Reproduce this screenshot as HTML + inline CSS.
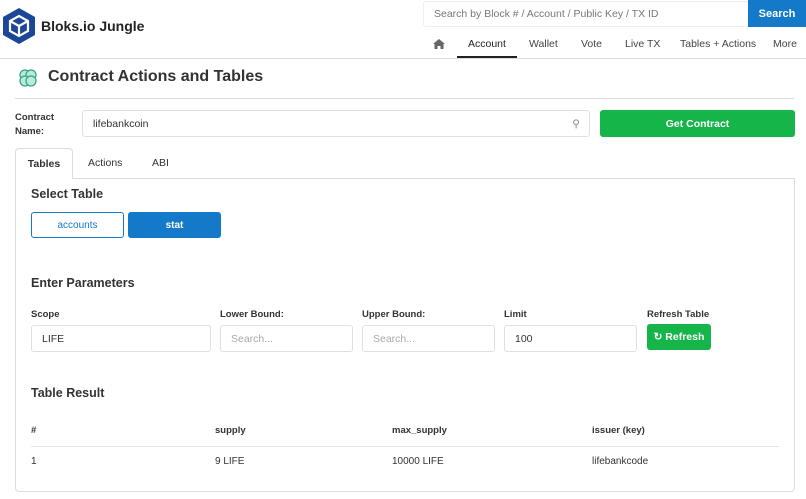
<!DOCTYPE html>
<html><head><style>
*{box-sizing:border-box;margin:0;padding:0}
body{width:806px;height:499px;background:#fff;font-family:"Liberation Sans",sans-serif;color:#333;position:relative;overflow:hidden;font-size:10.5px}
.a{position:absolute}
.btn{display:flex;align-items:center;justify-content:center}
.inp{position:absolute;border:1px solid #e0e0e0;border-radius:3px;background:#fff;font-size:10.5px;padding-left:10px;display:flex;align-items:center}
.ph{color:#aaa}
.lbl{position:absolute;font-size:9.5px;font-weight:bold;color:#333}
h3{position:absolute;font-size:12.5px;font-weight:bold;color:#333}
</style></head><body>
<svg class="a" style="left:2px;top:7px" width="34" height="38" viewBox="0 0 34 38"><polygon points="17,1 33,10 33,28 17,37 1,28 1,10" fill="#1c4797"/><g fill="none" stroke="#fff" stroke-width="2.2"><polygon points="17,9 26,14 26,24 17,29 8,24 8,14"/><path d="M8,14 17,19 26,14 M17,19 V29"/></g></svg>
<div class="a" style="left:41px;top:18px;font-size:14px;font-weight:bold;color:#222">Bloks.io Jungle</div>
<div class="inp" style="left:423px;top:1px;width:326px;height:26px;border-color:#eee"><span class="ph" style="color:#777">Search by Block # / Account / Public Key / TX ID</span></div>
<div class="a btn" style="left:748px;top:0;width:58px;height:27px;background:#1479c9;color:#fff;font-weight:bold;font-size:11px">Search</div>
<svg class="a" style="left:433px;top:39px" width="12" height="10" viewBox="0 0 12 10"><path d="M6,0 L12,5 L10.5,5 L10.5,10 L7.5,10 L7.5,7 L4.5,7 L4.5,10 L1.5,10 L1.5,5 L0,5 Z" fill="#666"/></svg>
<div class="a" style="left:468px;top:38px;font-size:10.5px;color:#222">Account</div>
<div class="a" style="left:457px;top:56px;width:60px;height:3px;background:#222"></div>
<div class="a" style="left:529px;top:38px;color:#444">Wallet</div>
<div class="a" style="left:581px;top:38px;color:#444">Vote</div>
<div class="a" style="left:625px;top:38px;color:#444">Live TX</div>
<div class="a" style="left:680px;top:38px;color:#444">Tables + Actions</div>
<div class="a" style="left:773px;top:38px;color:#444">More</div>
<div class="a" style="left:0;top:58px;width:806px;height:1px;background:#ddd"></div>
<svg class="a" style="left:17px;top:68px" width="22" height="20" viewBox="0 0 22 20"><g fill="#b8ecd9" stroke="#3aa389" stroke-width="1.3"><circle cx="8" cy="7" r="5"/><circle cx="14" cy="7" r="5"/><circle cx="8" cy="13" r="5"/><circle cx="14" cy="13" r="5"/></g></svg>
<div class="a" style="left:48px;top:68px;font-size:16px;font-weight:bold;color:#333">Contract Actions and Tables</div>
<div class="a" style="left:15px;top:98px;width:779px;height:1px;background:#ddd"></div>
<div class="lbl" style="left:15px;top:111px;line-height:14px">Contract<br>Name:</div>
<div class="inp" style="left:82px;top:110px;width:508px;height:27px">lifebankcoin<span style="position:absolute;right:9px;color:#888">&#9906;</span></div>
<div class="a btn" style="left:600px;top:110px;width:195px;height:27px;background:#16b54a;border-radius:3px;color:#fff;font-size:10.5px;font-weight:bold">Get Contract</div>
<div class="a" style="left:15px;top:178px;width:780px;height:314px;border:1px solid #ddd;border-radius:0 0 4px 4px"></div>
<div class="a btn" style="left:15px;top:148px;width:58px;height:31px;border:1px solid #ddd;border-bottom:none;background:#fff;border-radius:4px 4px 0 0;font-weight:bold;font-size:10.5px">Tables</div>
<div class="a" style="left:88px;top:157px">Actions</div>
<div class="a" style="left:152px;top:157px">ABI</div>
<h3 style="left:31px;top:187px">Select Table</h3>
<div class="a btn" style="left:31px;top:212px;width:93px;height:26px;border:1px solid #1479c9;border-radius:3px;color:#1479c9;font-size:10px">accounts</div>
<div class="a btn" style="left:128px;top:212px;width:93px;height:26px;background:#1479c9;border-radius:3px;color:#fff;font-size:10px;font-weight:bold">stat</div>
<h3 style="left:31px;top:276px">Enter Parameters</h3>
<div class="lbl" style="left:31px;top:309px">Scope</div>
<div class="lbl" style="left:220px;top:309px">Lower Bound:</div>
<div class="lbl" style="left:362px;top:309px">Upper Bound:</div>
<div class="lbl" style="left:504px;top:309px">Limit</div>
<div class="lbl" style="left:647px;top:309px">Refresh Table</div>
<div class="inp" style="left:31px;top:325px;width:180px;height:27px">LIFE</div>
<div class="inp" style="left:220px;top:325px;width:133px;height:27px"><span class="ph">Search...</span></div>
<div class="inp" style="left:362px;top:325px;width:133px;height:27px"><span class="ph">Search...</span></div>
<div class="inp" style="left:504px;top:325px;width:133px;height:27px">100</div>
<div class="a btn" style="left:647px;top:324px;width:64px;height:26px;background:#16b54a;border-radius:3px;color:#fff;font-weight:bold;font-size:10.5px">&#8635;&nbsp;Refresh</div>
<h3 style="left:31px;top:386px">Table Result</h3>
<div class="lbl" style="left:31px;top:425px">#</div>
<div class="lbl" style="left:215px;top:425px">supply</div>
<div class="lbl" style="left:392px;top:425px">max_supply</div>
<div class="lbl" style="left:592px;top:425px">issuer (key)</div>
<div class="a" style="left:31px;top:446px;width:748px;height:1px;background:#e5e5e5"></div>
<div class="a" style="left:31px;top:456px;font-size:10px">1</div>
<div class="a" style="left:215px;top:456px;font-size:10px">9 LIFE</div>
<div class="a" style="left:392px;top:456px;font-size:10px">10000 LIFE</div>
<div class="a" style="left:592px;top:456px;font-size:10px">lifebankcode</div>
</body></html>
